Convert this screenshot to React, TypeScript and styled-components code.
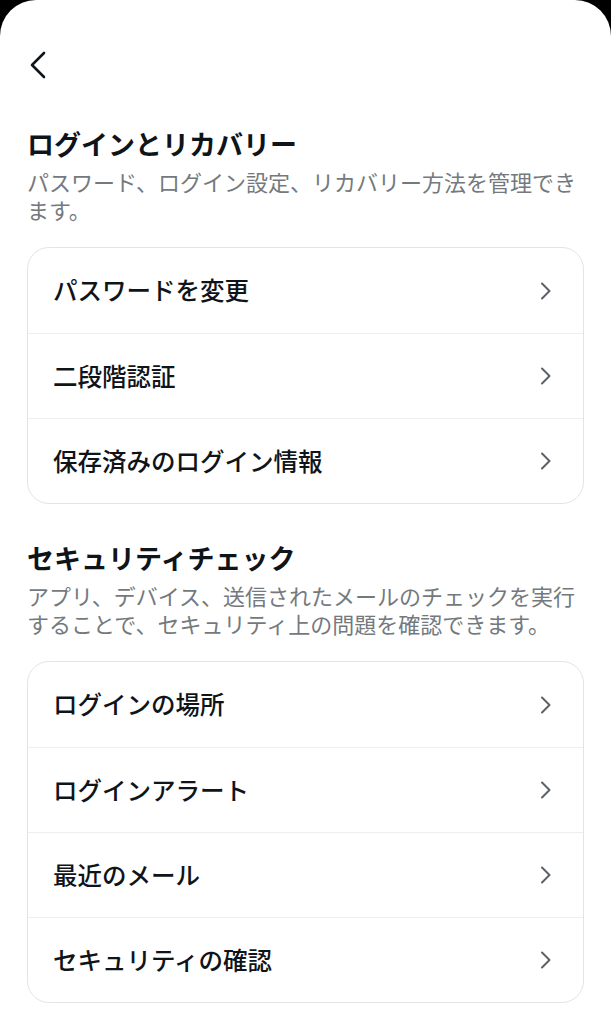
import React from "react";
import styled, { createGlobalStyle } from "styled-components";

const GlobalStyle = createGlobalStyle`
  html, body {
    margin: 0;
    padding: 0;
    background: #000;
  }
  * { box-sizing: border-box; }
  body {
    font-family: "Noto Sans CJK JP", "Noto Sans", sans-serif;
    -webkit-font-smoothing: antialiased;
  }
`;

const Sheet = styled.div`
  background: #fff;
  border-radius: 36px 36px 0 0;
  min-height: 1024px;
  padding: 0 27px 24px;
`;

const TopBar = styled.div`
  height: 90px;
  padding-top: 40px;
  display: flex;
  align-items: center;
`;

const BackButton = styled.button`
  width: 28px;
  height: 50px;
  padding: 0;
  border: none;
  background: none;
  display: flex;
  align-items: center;
  color: #0f1419;
`;

const Section = styled.section<{ $top: number }>`
  margin-top: ${(p) => p.$top}px;
`;

const Title = styled.h2`
  margin: 0;
  font-size: 27px;
  line-height: 34px;
  font-weight: 700;
  color: #0f1419;
`;

const Desc = styled.p`
  margin: 6px 0 0;
  font-size: 22px;
  line-height: 28px;
  font-weight: 400;
  color: #74797e;
`;

const Card = styled.div`
  margin-top: 24px;
  border: 1px solid #e2e4e6;
  border-radius: 22px;
  overflow: hidden;
`;

const Row = styled.div`
  height: 85px;
  display: flex;
  align-items: center;
  justify-content: space-between;
  padding: 0 30px 0 25px;
  & + & {
    border-top: 1px solid #eceeef;
  }
`;

const RowLabel = styled.span`
  font-size: 24.5px;
  font-weight: 500;
  color: #0f1419;
  line-height: 1;
`;

const Chevron = () => (
  <svg width="14" height="22" viewBox="0 0 14 22" fill="none">
    <path d="M3 3.5 L10.5 11 L3 18.5" stroke="#5b6167" strokeWidth="2" strokeLinecap="round" strokeLinejoin="round" />
  </svg>
);

const BackIcon = () => (
  <svg width="20" height="28" viewBox="0 0 20 28" fill="none">
    <path d="M17 2 L5 14 L17 26" stroke="#0f1419" strokeWidth="2.6" strokeLinecap="round" strokeLinejoin="round" />
  </svg>
);

const sections = [
  {
    title: "ログインとリカバリー",
    desc: "パスワード、ログイン設定、リカバリー方法を管理できます。",
    items: ["パスワードを変更", "二段階認証", "保存済みのログイン情報"],
    top: 37,
  },
  {
    title: "セキュリティチェック",
    desc: "アプリ、デバイス、送信されたメールのチェックを実行することで、セキュリティ上の問題を確認できます。",
    items: ["ログインの場所", "ログインアラート", "最近のメール", "セキュリティの確認"],
    top: 37,
  },
];

export default function App() {
  return (
    <>
      <GlobalStyle />
      <Sheet>
        <TopBar>
          <BackButton aria-label="戻る">
            <BackIcon />
          </BackButton>
        </TopBar>
        {sections.map((s) => (
          <Section key={s.title} $top={s.top}>
            <Title>{s.title}</Title>
            <Desc>{s.desc}</Desc>
            <Card>
              {s.items.map((item) => (
                <Row key={item}>
                  <RowLabel>{item}</RowLabel>
                  <Chevron />
                </Row>
              ))}
            </Card>
          </Section>
        ))}
      </Sheet>
    </>
  );
}
